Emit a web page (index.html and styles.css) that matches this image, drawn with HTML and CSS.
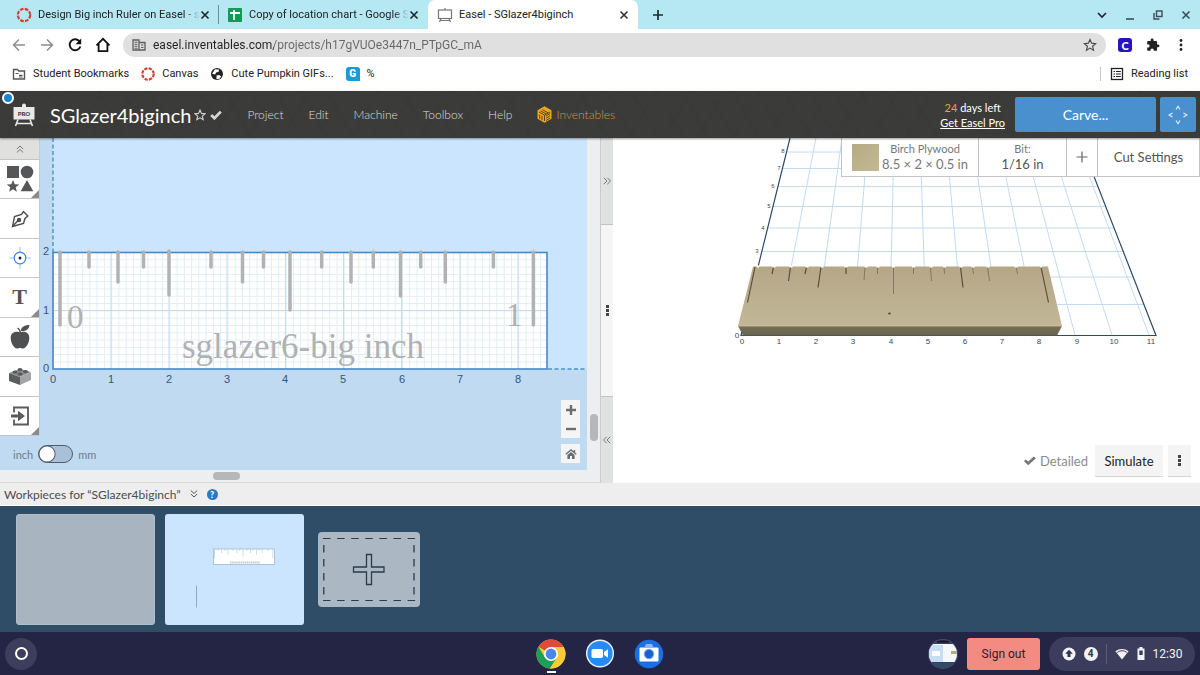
FILE: index.html
```html
<!DOCTYPE html>
<html lang="en">
<head>
  <meta charset="UTF-8">
  <meta name="viewport" content="width=device-width, initial-scale=1.0">
  <title>Easel - SGlazer4biginch</title>
  <link rel="stylesheet" href="styles.css">
</head>
<body>

<!-- Browser tabs -->
<div class="tabs">
  <div class="tab">
    <svg class="favicon" viewBox="0 0 16 16"><circle cx="8" cy="8" r="6.2" fill="none" stroke="#d5402b" stroke-width="2.2" stroke-dasharray="3.6 1.27"/></svg>
    <a class="tab-title fade" href="#">Design Big inch Ruler on Easel - s</a>
    <button class="icon-btn" aria-label="Close tab"><svg width="10" height="10" viewBox="0 0 10 10"><path d="M1.5 1.5l7 7M8.5 1.5l-7 7" stroke="#1d2b2f" stroke-width="1.7"/></svg></button>
  </div>
  <div class="tab second">
    <svg class="favicon" viewBox="0 0 16 16"><rect x="1" y="1" width="14" height="14" rx="1" fill="#139a55"/><path d="M3 6h10M7 3v10" stroke="#fff" stroke-width="1.8"/></svg>
    <a class="tab-title fade" href="#">Copy of location chart - Google S</a>
    <button class="icon-btn" aria-label="Close tab"><svg width="10" height="10" viewBox="0 0 10 10"><path d="M1.5 1.5l7 7M8.5 1.5l-7 7" stroke="#1d2b2f" stroke-width="1.7"/></svg></button>
  </div>
  <div class="tab active">
    <svg class="favicon" viewBox="0 0 16 16" fill="none" stroke="#777" stroke-width="1.2"><rect x="1.5" y="3" width="13" height="8.5"/><path d="M8 1v2M4 11.500l-1.500 3.500M12 11.500l1.500 3.500M3.500 13.500h9"/></svg>
    <a class="tab-title" href="#">Easel - SGlazer4biginch</a>
    <button class="icon-btn" aria-label="Close tab"><svg width="10" height="10" viewBox="0 0 10 10"><path d="M1.5 1.5l7 7M8.5 1.5l-7 7" stroke="#333" stroke-width="1.6"/></svg></button>
  </div>
  <button class="icon-btn new-tab" aria-label="New tab"><svg width="12" height="12" viewBox="0 0 12 12"><path d="M6 1v10M1 6h10" stroke="#1d2b2f" stroke-width="1.7"/></svg></button>
  <div class="window-btns">
    <button class="icon-btn" aria-label="Tab search"><svg width="10" height="10" viewBox="0 0 10 10" fill="none"><path d="M1 3l4 4 4-4" stroke="#222" stroke-width="1.6"/></svg></button>
    <button class="icon-btn" aria-label="Minimize"><svg width="10" height="10" viewBox="0 0 10 10"><path d="M1 9h8" stroke="#3c4e55" stroke-width="1.6"/></svg></button>
    <button class="icon-btn" aria-label="Restore"><svg width="10" height="10" viewBox="0 0 10 10" fill="none" stroke="#3c4e55" stroke-width="1.4"><rect x="3.5" y="1" width="5.5" height="5.5"/><path d="M1 3v6h5.500"/></svg></button>
    <button class="icon-btn" aria-label="Close"><svg width="10" height="10" viewBox="0 0 10 10"><path d="M1.5 1.5l7 7M8.5 1.5l-7 7" stroke="#3c4e55" stroke-width="1.6"/></svg></button>
  </div>
</div>

<!-- Address bar -->
<div class="toolbar">
  <button class="icon-btn" aria-label="Back"><svg width="16" height="16" viewBox="0 0 16 16" fill="none" stroke="#8b8d90" stroke-width="1.5"><path d="M14 8H3M8 2.500L2.500 8 8 13.500"/></svg></button>
  <button class="icon-btn" aria-label="Forward"><svg width="16" height="16" viewBox="0 0 16 16" fill="none" stroke="#8b8d90" stroke-width="1.5"><path d="M2 8h11M8 2.500L13.500 8 8 13.500"/></svg></button>
  <button class="icon-btn" aria-label="Reload"><svg width="16" height="16" viewBox="0 0 16 16"><path d="M12.800 4.800A5.500 5.500 0 1 0 13.400 9.500" fill="none" stroke="#111" stroke-width="1.9"/><path d="M14.200 1.500v5.700H8.500z" fill="#111"/></svg></button>
  <button class="icon-btn" aria-label="Home"><svg width="16" height="16" viewBox="0 0 16 16" fill="none" stroke="#111" stroke-width="1.8"><path d="M1.500 8.300L8 1.800l6.500 6.500M3.600 7v7.200h8.800V7"/></svg></button>
  <div class="omnibox">
    <svg width="14" height="14" viewBox="0 0 14 14"><path d="M1 2h6v10H1zM7 4.500h6V12H7" fill="none" stroke="#5b5d60" stroke-width="1.3"/><path d="M2.500 4.200h3M2.500 6.200h3M2.500 8.200h3M2.500 10.200h3M9 7h2.500M9 9.500h2.500" stroke="#5b5d60" stroke-width="1.1"/></svg>
    <input class="url" type="text" aria-label="Address" value="easel.inventables.com/projects/h17gVUOe3447n_PTpGC_mA">
    <button class="icon-btn" aria-label="Bookmark this page"><svg width="14" height="14" viewBox="0 0 14 14"><path d="M7 1.500l1.600 3.700 4 .4-3 2.700.9 3.900L7 10.100l-3.500 2.100.9-3.900-3-2.700 4-.4z" fill="none" stroke="#4a4c50" stroke-width="1.2"/></svg></button>
  </div>
  <div class="extensions">
    <button class="icon-btn ext" aria-label="Clever extension">C</button>
    <button class="icon-btn" aria-label="Extensions"><svg width="14" height="14" viewBox="0 0 24 24" fill="#222"><path d="M20.500 11H19V7a2 2 0 0 0-2-2h-4V3.500a2.500 2.500 0 0 0-5 0V5H4a2 2 0 0 0-2 2v3.800h1.500a2.700 2.700 0 0 1 0 5.400H2V20a2 2 0 0 0 2 2h3.800v-1.500a2.700 2.700 0 0 1 5.400 0V22H17a2 2 0 0 0 2-2v-4h1.500a2.500 2.500 0 0 0 0-5z"/></svg></button>
    <button class="icon-btn" aria-label="Browser menu"><svg width="14" height="14" viewBox="0 0 14 14" fill="#222"><circle cx="7" cy="2.500" r="1.400"/><circle cx="7" cy="7" r="1.400"/><circle cx="7" cy="11.500" r="1.400"/></svg></button>
  </div>
</div>

<!-- Bookmarks -->
<div class="bookmarks">
  <a href="#"><svg width="14" height="14" viewBox="0 0 14 14"><path d="M1.500 2.500h4l1.300 1.500h5.700v8h-11z" fill="none" stroke="#555" stroke-width="1.4"/><path d="M3.500 6.500h3M7 8.300h3.500M7 10h3.500" stroke="#555" stroke-width="1.2"/></svg>Student Bookmarks</a>
  <a href="#"><svg width="14" height="14" viewBox="0 0 16 16"><circle cx="8" cy="8" r="6.500" fill="none" stroke="#d5402b" stroke-width="2.4" stroke-dasharray="3.800 1.300"/></svg>Canvas</a>
  <a href="#"><svg width="14" height="14" viewBox="0 0 14 14"><circle cx="7" cy="7" r="6" fill="#222"/><path d="M5 2.200l4 .3-.3 2.300-2.600.6-1 2-3-.7M6.500 8.500l2.700-.4 2 1.400-1.700 2.200-3 .5z" fill="#fff"/></svg>Cute Pumpkin GIFs...</a>
  <a href="#"><span class="g-icon">G</span>%</a>
  <a class="reading" href="#"><svg width="14" height="14" viewBox="0 0 14 14" fill="none" stroke="#222"><rect x="1.500" y="1.500" width="11" height="11" stroke-width="1.3"/><path d="M3.500 4.500H5M6 4.500h4.800M3.500 7H5M6 7h4.800M3.500 9.500H5M6 9.500h4.800" stroke-width="1.2"/></svg>Reading list</a>
</div>

<!-- Easel header -->
<header class="header">
  <span class="live-dot"></span>
  <a class="logo" href="#" aria-label="Easel Pro">
    <svg width="24" height="24" viewBox="0 0 24 24"><path d="M10 2.500a2 2 0 0 1 4 0V4h8.500v12.500h-21V4H10z" fill="#e9e9e7"/><path d="M6 16.500L3.500 23M18 16.500l2.500 6.500M4.500 20.500h15" stroke="#e9e9e7" stroke-width="1.6"/><text x="12" y="13" class="logo-text">PRO</text></svg>
  </a>
  <h1>SGlazer4biginch</h1>
  <svg class="star" width="12" height="12" viewBox="0 0 14 14"><path d="M7 1.200l1.700 3.900 4.200.4-3.200 2.800 1 4.200L7 10.300l-3.700 2.200 1-4.200L1.100 5.500l4.200-.4z" fill="none" stroke="#cfcfcf" stroke-width="1.3"/></svg>
  <svg class="check" width="12" height="10" viewBox="0 0 12 10"><path d="M1.200 5l3.200 3.200L10.800 1.600" fill="none" stroke="#d5d5d5" stroke-width="2.8"/></svg>
  <nav>
    <a href="#">Project</a>
    <a href="#">Edit</a>
    <a href="#">Machine</a>
    <a href="#">Toolbox</a>
    <a href="#">Help</a>
    <a class="inventables" href="#"><svg width="15" height="17" viewBox="0 0 15 17"><path d="M7.500.3l7 4v8.400l-7 4-7-4V4.300z" fill="#eba61e"/><path d="M2 6l5.500 3.200L13 6M7.500 9.200V15M3.600 4.900l5.600 3M5.500 3.700l5.600 3.200M2.700 8.500v4.300M5 9.800v4.400M9 12.200l4-2.400M9 14.500l4-2.400M9 10l4-2.400" stroke="#4a3c1d" stroke-width=".9" fill="none"/></svg>Inventables</a>
  </nav>
  <div class="trial">
    <span><b>24</b> days left</span>
    <a href="#">Get Easel Pro</a>
  </div>
  <button class="carve">Carve...</button>
  <button class="jog" aria-label="Jog machine"><svg width="20" height="20" viewBox="0 0 20 20" fill="none" stroke="#e4f0fa" stroke-width="1.1"><path d="M8 4.500l2-3.200 2 3.200M8 15.500l2 3.200 2-3.200M4.500 8L1 10l3.500 2M15.500 8l3.500 2-3.500 2"/></svg></button>
</header>

<main class="workspace">
  <!-- 2D design -->
  <section class="design">
    <div class="canvas">
      <svg class="drawing" viewBox="0 138 587 332" preserveAspectRatio="xMinYMin slice">
        <defs>
          <pattern id="minor" x="53" y="252" width="7.27" height="7.3" patternUnits="userSpaceOnUse"><path d="M0 .5h7.27M.5 0v7.3" stroke="#e2edf2" stroke-width="1"/></pattern>
        </defs>
        <rect x="0" y="138" width="587" height="332" fill="#c0daf1"/>
        <rect x="53" y="138" width="534" height="231" fill="#cbe5fe"/>
        <path d="M53 138v114M548 369h39" stroke="#4b90d0" stroke-width="1.4" stroke-dasharray="4 2.500"/>
        <rect x="53" y="252.500" width="494" height="116.500" fill="#fff"/>
        <rect x="53" y="252.500" width="494" height="116.500" fill="url(#minor)"/>
        <path d="M111 253v116M169 253v116M227 253v116M285.500 253v116M343.500 253v116M401.500 253v116M460 253v116M518 253v116M53 310.500h494" stroke="#c2dcf2"/>
        <rect x="53" y="252.500" width="494" height="116.500" fill="none" stroke="#4589c8" stroke-width="1.6"/>
        <path class="ticks" d="M60 252v73M89 252v15M118 252v30M143.500 252v15M169 251v44M211 252v15M242.500 252v30M263.500 252v15M290 252v58M321.700 252v15M351 252v30M373.300 252v15M400.500 252v44M420.700 252v15M445.300 252v30M493.400 252v15M533.400 252v73"/>
        <g class="engraved">
          <text x="67" y="328" font-size="33">0</text>
          <text x="506" y="326" font-size="33">1</text>
          <text x="182" y="358" font-size="35">sglazer6-big inch</text>
        </g>
        <g class="axis">
          <text x="46" y="255">2</text><text x="46" y="314">1</text><text x="46" y="372">0</text>
          <text x="53" y="383">0</text><text x="111" y="383">1</text><text x="169" y="383">2</text>
          <text x="227" y="383">3</text><text x="285" y="383">4</text><text x="343" y="383">5</text>
          <text x="402" y="383">6</text><text x="460" y="383">7</text><text x="518" y="383">8</text>
        </g>
      </svg>

      <div class="tools">
        <button class="collapse" aria-label="Collapse tools"><svg width="8" height="8" viewBox="0 0 8 8" fill="none" stroke="#777"><path d="M.8 4L4 1l3.200 3M.8 7.500L4 4.500l3.200 3"/></svg></button>
        <button class="more" aria-label="Shapes"><svg width="28" height="28" viewBox="0 0 28 28" fill="#555659"><rect x="1" y="1" width="12" height="12"/><circle cx="21" cy="7" r="6.300"/><path d="M7 15l1.700 4.200 4.500.3-3.500 2.800 1.200 4.400L7 24.200l-3.900 2.500 1.200-4.400-3.500-2.800 4.500-.3zM21 15l6.300 11.300H14.700z"/></svg></button>
        <button aria-label="Pen"><svg width="18" height="18" viewBox="0 0 18 18" fill="none" stroke="#4b4c4e" stroke-width="1.4"><path d="M1.500 16.500L3.500 6.500 10.500 4.500 12.500 1.500 16.800 6 14 8.500 12.500 13.500z"/><path d="M1.500 16.500l6-6.500"/><circle cx="8" cy="10" r="1.500" fill="#4b4c4e"/></svg></button>
        <button aria-label="Drill point"><svg width="22" height="22" viewBox="0 0 22 22"><path d="M11 0v5M11 17v5M0 11h5M17 11h5" stroke="#9cc4ea"/><circle cx="11" cy="11" r="5.800" fill="#fff" stroke="#3b82d6" stroke-width="1.2"/><circle cx="11" cy="11" r="1.500" fill="#222"/></svg></button>
        <button class="more text-tool">T</button>
        <button aria-label="Clip art"><svg width="22" height="26" viewBox="0 0 22 26" fill="#4f5052"><path d="M11 8.500c2-1.500 9-1.700 9.300 5 .2 5-3.300 11-6.300 11-1.200 0-1.800-.6-3-.6s-1.800.6-3 .6c-3 0-6.500-6-6.300-11 .3-6.700 7.300-6.500 9.300-5z"/><path d="M12 7c-.3-3.500 3-6 8.500-6-.5 4.500-4 6.500-8.500 6z"/><path d="M11.300 9c0-2.500-.8-3.800-2.800-5" fill="none" stroke="#4f5052" stroke-width="1.4"/></svg></button>
        <button aria-label="Apps"><svg width="24" height="20" viewBox="0 0 24 20"><path d="M1 7l11-4 11 3-11 5z" fill="#8a8b8d"/><path d="M1 7l11 4v8L1 15z" fill="#5c5d5f"/><path d="M12 11l11-5v8l-11 5z" fill="#a3a4a6"/><g fill="#58595b"><ellipse cx="7" cy="6" rx="2.500" ry="1.500"/><ellipse cx="12" cy="3.500" rx="2.500" ry="1.500"/><ellipse cx="12" cy="8" rx="2.500" ry="1.500"/><ellipse cx="17.500" cy="5.500" rx="2.500" ry="1.500"/></g></svg></button>
        <button class="more" aria-label="Import"><svg width="20" height="20" viewBox="0 0 20 20"><path d="M4 6.500V1.500h14v17H4v-5" fill="none" stroke="#5a5b5d" stroke-width="1.8"/><path d="M1 8.500h7V4.800L15 10l-7 5.200v-3.700H1z" fill="#5a5b5d"/></svg></button>
      </div>

      <div class="units">
        <label for="units">inch</label>
        <input type="checkbox" id="units">
        <label for="units">mm</label>
      </div>

      <div class="zoom">
        <div class="zoom-group">
          <button aria-label="Zoom in"><svg width="12" height="12" viewBox="0 0 12 12"><path d="M6 1v10M1 6h10" stroke="#6c6d6f" stroke-width="2.4"/></svg></button>
          <button aria-label="Zoom out"><svg width="12" height="12" viewBox="0 0 12 12"><path d="M1 6h10" stroke="#6c6d6f" stroke-width="2.4"/></svg></button>
        </div>
        <button aria-label="Reset view"><svg width="12" height="12" viewBox="0 0 12 12"><path d="M.8 6.300L6 2l5.200 4.300M9.500 2v3" fill="none" stroke="#6c6d6f" stroke-width="1.4"/><path d="M2.400 7L6 4l3.600 3v4H7V8H5v3H2.400z" fill="#6c6d6f"/></svg></button>
      </div>
    </div>
    <div class="scroll-v"><span></span></div>
    <div class="scroll-h"><span></span></div>
  </section>

  <div class="splitter">
    <button aria-label="Expand design"><svg width="8" height="8" viewBox="0 0 8 8" fill="none" stroke="#777"><path d="M.8.800L4 4 .8 7.200M4.300.800L7.500 4 4.300 7.200"/></svg></button>
    <div class="grip"><i></i><i></i><i></i></div>
    <button aria-label="Expand preview"><svg width="8" height="8" viewBox="0 0 8 8" fill="none" stroke="#777"><path d="M3.700.800L.5 4l3.200 3.200M7.200.800L4 4l3.200 3.200"/></svg></button>
  </div>

  <!-- 3D preview -->
  <section class="preview">
    <svg class="drawing" viewBox="613 138 587 345" preserveAspectRatio="xMinYMin slice">
      <defs>
        <linearGradient id="wood" x1="0" y1="0" x2="0" y2="1"><stop offset="0" stop-color="#b5a787"/><stop offset="1" stop-color="#c1b797"/></linearGradient>
        <linearGradient id="front" x1="0" y1="0" x2="0" y2="1"><stop offset="0" stop-color="#776e55"/><stop offset="1" stop-color="#696450"/></linearGradient>
      </defs>
      <path d="M786 152h299M782 168.500h309M778 186.500h319M773 206.500h332M768 228h346M762 251.500h361M756 277h377M749 304.500h395" stroke="#c3daf1" fill="none"/>
      <path d="M778 335L816 138M815 335L842 138M852 335L868 138M889.500 335L894 138M926.500 335L920 138M963.500 335L946 138M1001 335L972 138M1038 335L998 138M1075 335L1023 138M1112 335L1049 138M1149 335L1075 138" stroke="#c3daf1" fill="none"/>
      <path d="M790 138L741 335.500H1156L1079 138" stroke="#2c4a6b" stroke-width="1.2" fill="none"/>
      <path d="M753 266.500h295l14 59.500H738z" fill="url(#wood)"/>
      <path d="M738 326h324l-5 9.500H743z" fill="url(#front)"/>
      <path d="M738 326h324" stroke="#cfc6a6" stroke-width=".8"/>
      <path d="M755 267l-7.500 35.500M1041 267l7.500 35.500M773.500 267l-1.500 7M790.500 267l-2 14M806.500 267l-1.500 7M821 267l-3 20.500M846 267v7M960.500 267l2.500 20.500" stroke="#5b4f38" stroke-width="1.2"/>
      <path d="M865 267l-1 13M877.500 267v7M893.500 267v27M913.500 267v7M930.500 267l1 14M944 267l.5 7M972.500 267l1 7M987.500 267l2 14M1016 267l1.500 7" stroke="#85775a"/>
      <path d="M757 266.500h2M772.500 266.500h3M789.500 266.500h3M805.500 266.500h3M820.500 266.500h3M844.500 266.500h3M864.500 266.500h3M876.500 266.500h3M892 266.500h3M912 266.500h3M929.500 266.500h3M943 266.500h3M959.500 266.500h3M971.500 266.500h3M986.500 266.500h3M1014.500 266.500h3M1040 266.500h2" stroke="#fff" stroke-width="2"/>
      <ellipse cx="889.500" cy="313.500" rx="1.300" ry="1" fill="#4d4431"/>
      <g class="axis small">
        <text x="737" y="338">0</text><text x="742" y="344">0</text><text x="779" y="344">1</text><text x="816" y="344">2</text>
        <text x="853" y="344">3</text><text x="891" y="344">4</text><text x="928" y="344">5</text><text x="965" y="344">6</text>
        <text x="1002" y="344">7</text><text x="1039" y="344">8</text><text x="1077" y="344">9</text><text x="1114" y="344">10</text><text x="1151" y="344">11</text>
      </g>
      <g class="axis tiny">
        <text x="757" y="253">3</text><text x="763" y="230">4</text><text x="769" y="208">5</text><text x="773" y="188">6</text><text x="779" y="170">7</text><text x="783" y="153">8</text>
      </g>
    </svg>

    <div class="settings">
      <button class="material">
        <span class="swatch"></span>
        <span class="stack"><small>Birch Plywood</small><span>8.5 × 2 × 0.5 in</span></span>
      </button>
      <button class="bit"><span class="stack"><small>Bit:</small><span>1/16 in</span></span></button>
      <button class="add-bit" aria-label="Add bit"><svg width="12" height="12" viewBox="0 0 12 12"><path d="M6 .5v11M.5 6h11" stroke="#666" stroke-width="1.2"/></svg></button>
      <button class="cut">Cut Settings</button>
    </div>

    <div class="simulate">
      <label class="detailed"><input type="checkbox" checked>Detailed</label>
      <button class="sim-btn">Simulate</button>
      <button class="sim-more" aria-label="More options"><i></i><i></i><i></i></button>
    </div>
  </section>
</main>

<!-- Workpieces -->
<div class="pieces-bar">
  <span>Workpieces for “SGlazer4biginch”</span>
  <svg width="8" height="8" viewBox="0 0 8 8" fill="none" stroke="#555"><path d="M.8.500L4 3.500 7.200.500M.8 4L4 7l3.200-3"/></svg>
  <button class="help" aria-label="Help">?</button>
</div>
<div class="pieces">
  <button class="piece faded" aria-label="Workpiece 1"></button>
  <button class="piece" aria-label="Workpiece 2">
    <svg viewBox="0 0 139 111" width="139" height="111">
      <rect x="48.500" y="35" width="61" height="15.500" fill="#fff" stroke="#9db9cf" stroke-width=".8"/>
      <path d="M49.500 35v9M53 35v2M56.600 35v4M60 35v2M63 35v5.500M68 35v2M72 35v4M74.700 35v2M78 35v7.500M82 35v2M85.500 35v4M88 35v2M91.500 35v5.500M94 35v2M97 35v4M103 35v2M107.800 35v9" stroke="#b9c2ca" stroke-width=".6"/>
      <path d="M65 48.500h30" stroke="#c3ccd3" stroke-width="2" stroke-dasharray="1.500 .6"/>
      <path d="M31.500 71.500v22" stroke="#8ba0b5" stroke-width=".9"/>
    </svg>
  </button>
  <button class="piece-add" aria-label="Add workpiece">
    <svg viewBox="0 0 102 75" width="102" height="75" fill="none" stroke="#293b4c">
      <path d="M5 6.500h93M5 68.500h93" stroke-width="1.2" stroke-dasharray="7.500 6.600"/>
      <path d="M5.800 13v50M96 13v50" stroke-width="1.3" stroke-dasharray="7.500 6.500"/>
      <path d="M48.500 22.500h5v12.500h12.500v5H53.500v12.500h-5V40H35.500v-5h13z" stroke-width="1.3"/>
    </svg>
  </button>
</div>

<!-- Shelf -->
<footer class="shelf">
  <div class="shelf-side">
    <button class="launcher" aria-label="Launcher"><i></i></button>
  </div>
  <div class="apps">
    <a class="running" href="#" aria-label="Chrome"><svg width="30" height="30" viewBox="0 0 30 30"><circle cx="15" cy="15" r="14.500" fill="#fbcb37"/><path d="M15 15L2.400 7.800A14.500 14.500 0 0 1 27.600 8H15z" fill="#de4a3c"/><path d="M2.400 7.800A14.500 14.500 0 0 0 14 29.500L21 18.500 9 18.500z" fill="#1d9e59"/><path d="M15 8h12.600A14.500 14.500 0 0 1 14 29.500l7-11z" fill="#fbcb37"/><circle cx="15" cy="15" r="7" fill="#fff"/><circle cx="15" cy="15" r="5.400" fill="#4a86ee"/></svg></a>
    <a href="#" aria-label="Zoom"><svg width="30" height="30" viewBox="0 0 30 30"><circle cx="15" cy="14.500" r="14" fill="#e9f2fc"/><circle cx="15" cy="14.500" r="12.600" fill="#278af5"/><rect x="6.500" y="10" width="11.500" height="9" rx="1.800" fill="#fff"/><path d="M19 13l4-2.700v8.400L19 16z" fill="#fff"/></svg></a>
    <a href="#" aria-label="Camera"><svg width="30" height="30" viewBox="0 0 30 30"><circle cx="15" cy="15" r="14.300" fill="#1b6fe4"/><rect x="5.500" y="8.500" width="19" height="14" rx="1" fill="#fff"/><path d="M10.500 8.500l1.500-3.500h6l1.500 3.500z" fill="#8bb8f3"/><circle cx="15" cy="15" r="5.300" fill="#7fb0f3"/><circle cx="15" cy="15" r="4.200" fill="#1b5fcc"/></svg></a>
  </div>
  <div class="shelf-side end">
    <button class="thumb" aria-label="Recent capture"><svg width="30" height="32" viewBox="0 0 30 32"><defs><clipPath id="round"><circle cx="15" cy="16" r="14"/></clipPath></defs><circle cx="15" cy="16" r="15" fill="#4a4b68"/><g clip-path="url(#round)"><rect width="30" height="32" fill="#3c3d5c"/><path d="M0 6h30v18H0z" fill="#f4f7fa"/><path d="M0 7h15v17H0z" fill="#c7def2"/><path d="M4 13h8v5H4z" fill="#fff"/><path d="M9 3.500h12" stroke="#15151f" stroke-width="2"/><path d="M23 13h6v3h-6z" fill="#b4a982"/><path d="M0 25h30v7H0z" fill="#2f4d68"/></g></svg></button>
    <button class="sign-out">Sign out</button>
    <button class="status">
      <svg width="14" height="14" viewBox="0 0 14 14"><circle cx="7" cy="7" r="6.500" fill="#f3f3f7"/><path d="M7 2.800l3.800 4H8.500V10h-3V6.800H3.200z" fill="#32334f"/></svg>
      <span class="count">4</span>
      <span class="divider"></span>
      <svg width="14" height="12" viewBox="0 0 14 12"><path d="M7 11.500L.4 3.300a10.500 10.500 0 0 1 13.200 0z" fill="#f3f3f7"/><path d="M2.300 4.400a8 8 0 0 1 9.400 0" stroke="#3c3d5c" fill="none"/></svg>
      <svg width="8" height="13" viewBox="0 0 8 13"><path d="M2.500 0h3v1.500H7.500V13h-7V1.500h2z" fill="#f3f3f7"/><path d="M2.300 3.500h3.400V8H2.300z" fill="#3c3d5c"/></svg>
      <span>12:30</span>
    </button>
  </div>
</footer>

</body>
</html>
```
FILE: styles.css
```css
* {
  box-sizing: border-box;
}
body {
  margin: 0;
  min-height: 100vh;
  display: flex;
  flex-direction: column;
  background: #fff;
  color: #222;
  font-family: Lato, sans-serif;
  font-size: 13px;
}
button {
  border: none;
  padding: 0;
  margin: 0;
  background: none;
  font: inherit;
  color: inherit;
}
a {
  color: inherit;
  text-decoration: none;
}
svg {
  display: block;
  flex-shrink: 0;
}
.icon-btn {
  display: flex;
  align-items: center;
  justify-content: center;
  flex-shrink: 0;
}

/* Browser */
.tabs {
  display: flex;
  height: 29px;
  background: #b5e8f3;
  font-family: Roboto, sans-serif;
  font-size: 11px;
}
.tab {
  display: flex;
  align-items: center;
  width: 210px;
  padding: 0 0 0 16px;
}
.tab .icon-btn {
  width: 10px;
}
.tab:first-child {
  padding-right: 1px;
}
.tab.second {
  padding: 0 9px 0 8px;
  margin-left: 8px;
  border-left: 1px solid #6f8f97;
  border-image: linear-gradient(transparent 20%, #6f8f97 20%, #6f8f97 80%, transparent 80%) 1;
}
.tab.active {
  padding: 0 9px;
  background: #fff;
  border-radius: 7px 7px 0 0;
}
.tab-title {
  flex: 1;
  white-space: nowrap;
}
.fade {
  -webkit-mask-image: linear-gradient(to right, #000 90%, transparent);
  mask-image: linear-gradient(to right, #000 90%, transparent);
}
.favicon {
  width: 16px;
  height: 16px;
  margin-right: 6px;
}
.new-tab {
  width: 40px;
}
.window-btns {
  display: flex;
  gap: 18px;
  margin-left: auto;
  padding-right: 9px;
}
.toolbar {
  display: flex;
  align-items: center;
  gap: 12px;
  height: 32px;
  padding: 0 12px 0 11px;
}
.omnibox {
  flex: 1;
  display: flex;
  align-items: center;
  gap: 7px;
  height: 24px;
  padding: 0 9px;
  border-radius: 12px;
  background: #e0e0e0;
}
.url {
  flex: 1;
  min-width: 0;
  border: none;
  padding: 0;
  outline: none;
  font-family: Roboto, sans-serif;
  font-size: 12px;
  color: transparent;
  background: linear-gradient(to right, #222 121px, #666 121px);
  -webkit-background-clip: text;
  background-clip: text;
}
.extensions {
  display: flex;
  gap: 14px;
}
.ext {
  width: 14px;
  height: 14px;
  border-radius: 3px;
  background: #2412c4;
  color: #fff;
  font-size: 11px;
  font-weight: 900;
}
.bookmarks {
  display: flex;
  align-items: center;
  gap: 12px;
  height: 30px;
  padding: 0 12px 5px;
  font-family: Roboto, sans-serif;
  font-size: 11px;
}
.bookmarks a {
  display: flex;
  align-items: center;
  gap: 7px;
}
.g-icon {
  width: 14px;
  height: 14px;
  border-radius: 3px 3px 0 3px;
  background: #1a9ad7;
  color: #fff;
  font-size: 10px;
  font-weight: 900;
  line-height: 14px;
  text-align: center;
}
.bookmarks .reading {
  margin-left: auto;
  padding-left: 9px;
  border-left: 1px solid #c4c4c4;
}

/* Header */
.header {
  position: relative;
  z-index: 2;
  display: flex;
  align-items: center;
  height: 47px;
  padding: 0 4px 0 12px;
  background: #3b3c3a;
  background-image: repeating-linear-gradient(60deg, transparent 0 18px, rgba(0, 0, 0, 0.02) 18px 22px), repeating-linear-gradient(120deg, transparent 0 26px, rgba(0, 0, 0, 0.02) 26px 30px);
  box-shadow: 0 1px 2px rgba(0, 0, 0, 0.4);
  color: #dcdcda;
}
.live-dot {
  position: absolute;
  left: 2px;
  top: 1px;
  width: 12px;
  height: 12px;
  border: 2px solid #fff;
  border-radius: 50%;
  background: #1786d2;
}
.logo-text {
  font: 900 6px Lato, sans-serif;
  fill: #3b3c3a;
  text-anchor: middle;
}
h1 {
  margin: 0 3px 0 14px;
  color: #fff;
  font-size: 20px;
  font-weight: 400;
}
.star {
  margin-right: 4px;
}
nav {
  display: flex;
  align-items: center;
  gap: 25px;
  margin-left: 25px;
  font-size: 12px;
  font-weight: 300;
}
.inventables {
  display: flex;
  align-items: center;
  gap: 4px;
  color: #d0963f;
}
.trial {
  display: flex;
  flex-direction: column;
  align-items: center;
  margin-left: auto;
  color: #fff;
  font-size: 11px;
  line-height: 15px;
}
.trial a {
  text-decoration: underline;
}
.trial b {
  color: #e0a544;
  font-weight: 400;
}
.carve,
.jog {
  height: 35px;
  border-radius: 2px;
  background: #4a8fce;
  color: #fff;
}
.carve {
  width: 141px;
  margin: 0 4px 0 10px;
  font-size: 14px;
}
.jog {
  display: flex;
  align-items: center;
  justify-content: center;
  width: 36px;
}

/* Workspace */
.workspace {
  flex: 1;
  display: flex;
  min-height: 345px;
}
.design {
  flex: 0 0 50%;
  display: grid;
  grid-template-columns: 1fr 13px;
  grid-template-rows: 1fr 12px;
  background: #eceeef;
  border-bottom: 1px solid #d8dadb;
}
.canvas,
.preview {
  position: relative;
  overflow: hidden;
}
.drawing {
  position: absolute;
  inset: 0;
  width: 100%;
  height: 100%;
}
.ticks {
  fill: none;
  stroke: #b1b2b4;
  stroke-width: 3.5px;
  stroke-linecap: round;
}
.engraved {
  font-family: "Liberation Serif", serif;
  fill: #b0b1b3;
}
.axis {
  font-family: "Liberation Sans", sans-serif;
  font-size: 11px;
  fill: #2f5680;
  text-anchor: middle;
}
.axis.small {
  font-size: 8px;
  fill: #3f4650;
}
.axis.tiny {
  font-size: 6px;
  fill: #3f4650;
}
.tools {
  position: absolute;
  left: 0;
  top: 0;
  display: flex;
  flex-direction: column;
  width: 40px;
  height: 298px;
  border-right: 1px solid #c4ccd2;
}
.tools button {
  position: relative;
  flex: 1;
  display: flex;
  align-items: center;
  justify-content: center;
  border-bottom: 1px solid #c3c6c6;
  background: #fff;
}
.tools .collapse {
  flex: 0 0 22px;
  background: #e0e0de;
}
.tools .more::after {
  content: "";
  position: absolute;
  right: 0;
  bottom: 0;
  border: 4px solid transparent;
  border-right-color: #8a8b8c;
  border-bottom-color: #8a8b8c;
}
.tools .text-tool {
  font-family: "Liberation Serif", serif;
  font-size: 22px;
  font-weight: 700;
  color: #555;
}
.units {
  position: absolute;
  left: 13px;
  bottom: 7px;
  display: flex;
  align-items: center;
  gap: 5px;
  color: #6d7d8b;
  font-size: 11px;
}
.units input {
  appearance: none;
  width: 35px;
  height: 18px;
  margin: 0;
  border: 1px solid #4d5d6b;
  border-radius: 9px;
  background: radial-gradient(circle at 8px 8px, #fff 7px, #4d5d6b 8px, #a9c0d6 9px);
}
.zoom {
  position: absolute;
  right: 7px;
  bottom: 7px;
  display: flex;
  flex-direction: column;
  gap: 6px;
}
.zoom button {
  display: flex;
  align-items: center;
  justify-content: center;
  width: 19px;
  height: 19px;
  background: #f5f5f5;
}
.scroll-v {
  display: flex;
  flex-direction: column;
  justify-content: flex-end;
  align-items: center;
  padding-bottom: 29px;
}
.scroll-v span,
.scroll-h span {
  border-radius: 4px;
  background: #b6b7b9;
}
.scroll-v span {
  width: 8px;
  height: 27px;
}
.scroll-h {
  display: flex;
  align-items: center;
  padding-left: 213px;
}
.scroll-h span {
  width: 27px;
  height: 8px;
}
.splitter {
  display: flex;
  flex-direction: column;
  width: 13px;
  border-left: 1px solid #c9cbcc;
  background: #f5f5f5;
}
.splitter button {
  display: flex;
  align-items: center;
  justify-content: center;
  height: 86px;
  background: #e0e1e1;
}
.grip {
  flex: 1;
  display: flex;
  flex-direction: column;
  align-items: center;
  justify-content: center;
  gap: 1px;
  border-top: 1px solid #c3c3c3;
  border-bottom: 1px solid #c3c3c3;
}
.grip i,
.sim-more i {
  width: 3px;
  height: 3px;
  background: #444;
}
.preview {
  flex: 1;
}
.settings {
  position: absolute;
  right: 0;
  top: 0;
  display: flex;
  height: 39px;
  background: #fff;
  border: 1px solid #c4c4c4;
  border-top: none;
  color: #555;
}
.settings button {
  display: flex;
  align-items: center;
  justify-content: center;
}
.settings button + button {
  border-left: 1px solid #c4c4c4;
}
.settings .material {
  gap: 3px;
  width: 136px;
  color: #777;
}
.swatch {
  width: 27px;
  height: 27px;
  background: linear-gradient(135deg, #b5aa83, #c3b993);
}
.stack {
  display: flex;
  flex-direction: column;
  align-items: center;
  font-size: 13px;
  line-height: 17px;
}
.stack small {
  color: #777;
  font-size: 11px;
  line-height: 15px;
}
.settings .bit {
  width: 88px;
}
.settings .add-bit {
  width: 31px;
}
.settings .cut {
  width: 102px;
}
.simulate {
  position: absolute;
  right: 9px;
  bottom: 6px;
  display: flex;
  align-items: center;
  gap: 5px;
}
.detailed {
  display: flex;
  align-items: center;
  gap: 4px;
  margin-right: 2px;
  color: #8b8b8b;
}
.detailed input {
  appearance: none;
  width: 12px;
  height: 10px;
  margin: 0;
  background: #777;
  clip-path: polygon(0 50%, 16% 34%, 36% 56%, 82% 4%, 100% 22%, 36% 92%);
}
.sim-btn,
.sim-more {
  height: 32px;
  background: #f4f4f4;
  border-bottom: 1px solid #d5d5d5;
}
.sim-btn {
  width: 68px;
}
.sim-more {
  display: flex;
  flex-direction: column;
  align-items: center;
  justify-content: center;
  gap: 1px;
  width: 23px;
}

/* Workpieces */
.pieces-bar {
  display: flex;
  align-items: center;
  gap: 9px;
  height: 23px;
  padding-left: 4px;
  background: #eee;
  border-bottom: 1px solid #fff;
  color: #4c4c4c;
  font-size: 12px;
}
.help {
  width: 11px;
  height: 11px;
  border-radius: 50%;
  background: #2a79c0;
  color: #fff;
  font-size: 9px;
  font-weight: 900;
  line-height: 11px;
}
.pieces {
  display: flex;
  align-items: center;
  gap: 10px;
  height: 126px;
  padding: 0 16px;
  background: #2f4d66;
}
.piece {
  width: 139px;
  height: 111px;
  border-radius: 3px;
  background: #cbe5fe;
}
.piece.faded {
  background: #a8b5c1;
  border: 1px solid #b0bfcc;
}
.piece-add {
  margin-left: 4px;
  border-radius: 4px;
  background: #abb8c4;
}

/* Shelf */
.shelf {
  display: flex;
  align-items: center;
  height: 43px;
  padding: 0 5px;
  background: #242545;
  font-family: Roboto, sans-serif;
}
.shelf-side {
  flex: 1;
  display: flex;
  align-items: center;
}
.shelf-side.end {
  justify-content: flex-end;
  gap: 9px;
}
.launcher {
  display: flex;
  align-items: center;
  justify-content: center;
  width: 32px;
  height: 32px;
  border-radius: 50%;
  background: #3d3d5c;
}
.launcher i {
  width: 13px;
  height: 13px;
  border: 2px solid #fff;
  border-radius: 50%;
}
.apps {
  display: flex;
  gap: 19px;
}
.running {
  position: relative;
}
.running::after {
  content: "";
  position: absolute;
  left: 11px;
  bottom: -4px;
  width: 9px;
  height: 2px;
  background: #fff;
}
.sign-out {
  width: 73px;
  height: 32px;
  border-radius: 3px;
  background: #f48b83;
  color: #2d1b24;
  font-size: 12px;
}
.status {
  display: flex;
  align-items: center;
  justify-content: center;
  gap: 8px;
  width: 146px;
  height: 34px;
  border-radius: 17px;
  background: #3c3d5c;
  color: #f3f3f7;
  font-size: 12px;
}
.count {
  width: 14px;
  height: 14px;
  border-radius: 50%;
  background: #f3f3f7;
  color: #32334f;
  font-size: 10px;
  font-weight: 700;
  line-height: 14px;
}
.divider {
  width: 1px;
  height: 20px;
  background: #5c5d78;
}
```
